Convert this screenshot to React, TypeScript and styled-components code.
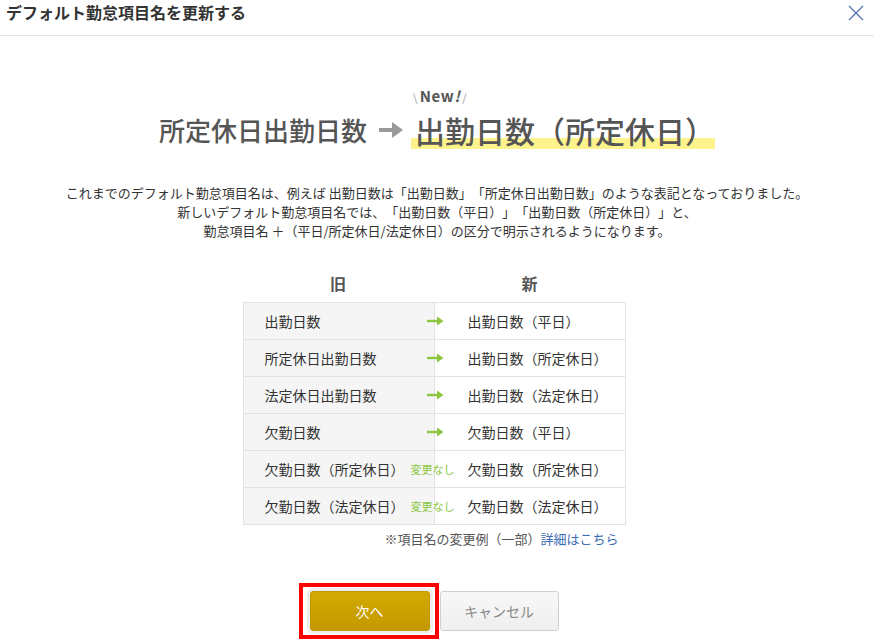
import React from 'react';
import styled, { createGlobalStyle } from 'styled-components';

const GlobalStyle = createGlobalStyle`
  html, body {
    margin: 0;
    padding: 0;
    background: #fff;
  }
  body {
    font-family: "Noto Sans CJK JP", "Noto Sans", sans-serif;
    color: #333;
    text-spacing-trim: space-all;
  }
`;

const Modal = styled.div`
  width: 874px;
  height: 644px;
  background: #fff;
  overflow: hidden;
`;

const Header = styled.div`
  height: 36px;
  border-bottom: 1px solid #e3e3e3;
  display: flex;
  justify-content: space-between;
  align-items: flex-start;
  padding: 1px 10px 0 6px;
  box-sizing: border-box;
`;

const HeaderTitle = styled.h1`
  margin: 0;
  font-size: 16px;
  line-height: 22px;
  font-weight: bold;
  color: #333;
`;

const CloseButton = styled.button`
  border: none;
  background: none;
  padding: 0;
  margin-top: 4px;
  width: 16px;
  height: 16px;
  cursor: pointer;
`;

const Body = styled.div`
  display: flex;
  flex-direction: column;
  align-items: center;
`;

const Hero = styled.div`
  display: flex;
  align-items: flex-end;
  gap: 11px;
  margin-top: 51px;
`;

const OldName = styled.span`
  font-size: 26px;
  line-height: 40px;
  color: #555;
  font-weight: 500;
`;

const HeroArrow = styled.svg`
  width: 26px;
  height: 40px;
  flex-shrink: 0;
`;

const NewBlock = styled.div`
  display: flex;
  flex-direction: column;
  align-items: flex-start;
  gap: 4px;
  margin-left: -4px;
`;

const NewLabel = styled.span`
  font-size: 15px;
  line-height: 18px;
  font-weight: bold;
  color: #555;
  letter-spacing: 0.5px;

  em {
    font-style: italic;
  }

  i {
    font-style: normal;
    font-weight: normal;
    color: #999;
    font-size: 11px;
    margin: 0 2px;
  }
`;

const NewName = styled.span`
  font-size: 30px;
  line-height: 40px;
  color: #555;
  font-weight: 500;
  padding-left: 4px;
  background: linear-gradient(
    transparent 28px,
    #fdf38c 28px,
    #fdf38c 39px,
    transparent 39px
  );
`;

const Lead = styled.p`
  margin: 33px 0 0;
  font-size: 13px;
  line-height: 19px;
  text-align: center;
  color: #333;
`;

const TableArea = styled.div`
  margin-top: 31px;
  width: 383px;
  margin-left: -6px;
`;

const HeadRow = styled.div`
  display: grid;
  grid-template-columns: 191px 192px;
  margin-bottom: 7px;
`;

const HeadCell = styled.div`
  text-align: center;
  font-size: 16px;
  line-height: 24px;
  font-weight: bold;
  color: #555;
`;

const Table = styled.div`
  border: 1px solid #e3e3e3;
  border-bottom: none;
`;

const Row = styled.div`
  display: flex;
  height: 37px;
  border-bottom: 1px solid #e3e3e3;
  box-sizing: border-box;
`;

const Cell = styled.div<{ $old?: boolean }>`
  flex: ${p => (p.$old ? '0 0 191px' : '1 1 auto')};
  box-sizing: border-box;
  display: flex;
  align-items: center;
  font-size: 14px;
  color: #333;
  background: ${p => (p.$old ? '#f5f5f5' : '#fff')};
  padding-left: ${p => (p.$old ? '21px' : '33px')};
  border-right: ${p => (p.$old ? '1px solid #e3e3e3' : 'none')};
`;

const Marker = styled.div`
  width: 0;
  flex-shrink: 0;
  display: flex;
  align-items: center;
  justify-content: center;
  position: relative;
  z-index: 1;

  & > * {
    flex-shrink: 0;
  }
`;

const Unchanged = styled.span`
  white-space: nowrap;
  font-size: 11px;
  color: #8cc63f;
  margin-left: -4px;
`;

const Note = styled.div`
  text-align: right;
  font-size: 13px;
  line-height: 19px;
  color: #555;
  padding-right: 7px;
  margin-top: 4px;

  a {
    color: #3b6cb4;
    text-decoration: none;
  }
`;

const Buttons = styled.div`
  display: flex;
  gap: 10px;
  margin-top: 43px;
  padding-right: 6px;
`;

const Highlight = styled.span`
  position: relative;
  display: inline-flex;

  &::after {
    content: '';
    position: absolute;
    top: -8px;
    right: -9px;
    bottom: -8px;
    left: -11px;
    border: 4px solid #f00;
    pointer-events: none;
  }
`;

const Button = styled.button<{ $primary?: boolean }>`
  width: ${p => (p.$primary ? '120px' : '119px')};
  height: 40px;
  border-radius: 3px;
  font-family: inherit;
  font-size: 14px;
  cursor: pointer;
  border: 1px solid ${p => (p.$primary ? '#c29800' : '#d0d0d0')};
  color: ${p => (p.$primary ? '#fff' : '#888')};
  background: ${p =>
    p.$primary
      ? 'linear-gradient(#d3a900, #c39900)'
      : 'linear-gradient(#f8f8f8, #efefef)'};
  box-shadow: ${p => (p.$primary ? '0 0 0 3px #eee' : 'none')};
`;

const GreenArrow = () => (
  <svg width="17" height="10" viewBox="0 0 17 10" style={{ marginLeft: 2 }}>
    <line x1="0" y1="5" x2="11" y2="5" stroke="#8cc63f" strokeWidth="2.4" />
    <path d="M10 0.5 L16.5 5 L10 9.5 Z" fill="#8cc63f" />
  </svg>
);

const rows: { from: string; to: string; same?: boolean }[] = [
  { from: '出勤日数', to: '出勤日数（平日）' },
  { from: '所定休日出勤日数', to: '出勤日数（所定休日）' },
  { from: '法定休日出勤日数', to: '出勤日数（法定休日）' },
  { from: '欠勤日数', to: '欠勤日数（平日）' },
  { from: '欠勤日数（所定休日）', to: '欠勤日数（所定休日）', same: true },
  { from: '欠勤日数（法定休日）', to: '欠勤日数（法定休日）', same: true },
];

const App: React.FC = () => {
  return (
    <>
      <GlobalStyle />
      <Modal>
        <Header>
          <HeaderTitle>デフォルト勤怠項目名を更新する</HeaderTitle>
          <CloseButton aria-label="閉じる">
            <svg width="16" height="16" viewBox="0 0 16 16">
              <path
                d="M1 1 L15 15 M15 1 L1 15"
                stroke="#5b79b0"
                strokeWidth="1.4"
                fill="none"
              />
            </svg>
          </CloseButton>
        </Header>

        <Body>
          <Hero>
            <OldName>所定休日出勤日数</OldName>
            <HeroArrow viewBox="0 0 26 40">
              <line x1="1" y1="20" x2="16" y2="20" stroke="#999" strokeWidth="4" />
              <path d="M14 12 L25 20 L14 28 Z" fill="#999" />
            </HeroArrow>
            <NewBlock>
              <NewLabel>
                <i>\</i>New<em>!</em><i>/</i>
              </NewLabel>
              <NewName>出勤日数（所定休日）</NewName>
            </NewBlock>
          </Hero>

          <Lead>
            これまでのデフォルト勤怠項目名は、例えば 出勤日数は「出勤日数」「所定休日出勤日数」のような表記となっておりました。
            <br />
            新しいデフォルト勤怠項目名では、「出勤日数（平日）」「出勤日数（所定休日）」と、
            <br />
            勤怠項目名 ＋（平日/所定休日/法定休日）の区分で明示されるようになります。
          </Lead>

          <TableArea>
            <HeadRow>
              <HeadCell>旧</HeadCell>
              <HeadCell>新</HeadCell>
            </HeadRow>
            <Table>
              {rows.map(r => (
                <Row key={r.from}>
                  <Cell $old>{r.from}</Cell>
                  <Marker>{r.same ? <Unchanged>変更なし</Unchanged> : <GreenArrow />}</Marker>
                  <Cell>{r.to}</Cell>
                </Row>
              ))}
            </Table>
            <Note>
              ※項目名の変更例（一部）<a href="#">詳細はこちら</a>
            </Note>
          </TableArea>

          <Buttons>
            <Highlight>
              <Button $primary>次へ</Button>
            </Highlight>
            <Button>キャンセル</Button>
          </Buttons>
        </Body>
      </Modal>
    </>
  );
};

export default App;
